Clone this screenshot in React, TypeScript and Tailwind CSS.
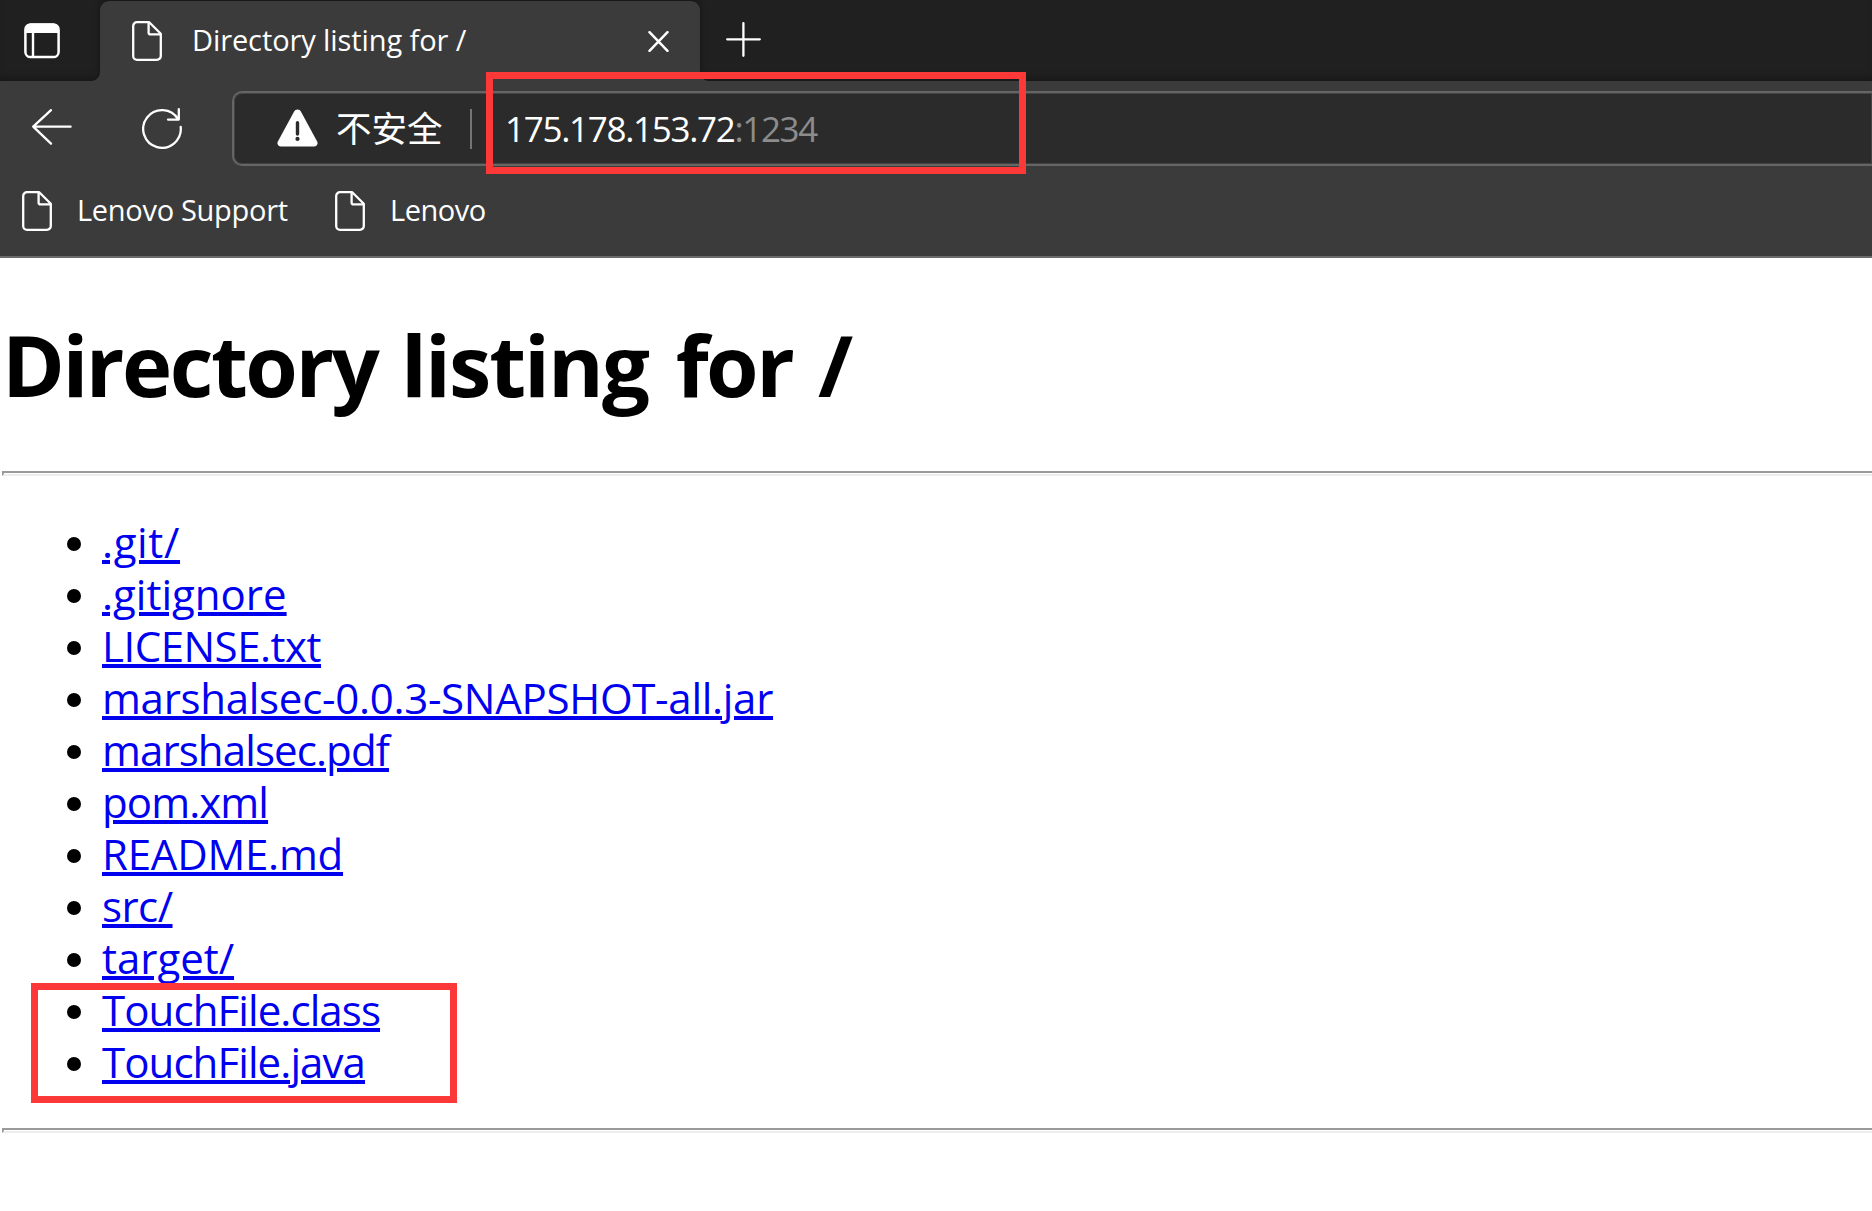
const files = [
  { name: '.git/', tracking: 'tracking-[0.64px]' },
  { name: '.gitignore', tracking: 'tracking-normal' },
  { name: 'LICENSE.txt', tracking: 'tracking-[-0.49px]' },
  { name: 'marshalsec-0.0.3-SNAPSHOT-all.jar', tracking: 'tracking-[-0.285px]' },
  { name: 'marshalsec.pdf', tracking: 'tracking-[-0.886px]' },
  { name: 'pom.xml', tracking: 'tracking-[-0.9px]' },
  { name: 'README.md', tracking: 'tracking-[-0.22px]' },
  { name: 'src/', tracking: 'tracking-[-0.55px]' },
  { name: 'target/', tracking: 'tracking-[-0.03px]' },
  { name: 'TouchFile.class', tracking: 'tracking-[-0.907px]' },
  { name: 'TouchFile.java', tracking: 'tracking-[-0.914px]' },
];

function PageIcon() {
  return (
    <svg className="h-10 w-[30px] shrink-0" viewBox="0 0 30 40" fill="none" stroke="#fff" strokeWidth="2.3" strokeLinejoin="round">
      <path d="M5 1.2H17.2L28.8 12.8V35A3.8 3.8 0 0 1 25 38.8H5A3.8 3.8 0 0 1 1.2 35V5A3.8 3.8 0 0 1 5 1.2Z" />
      <path d="M16.6 1.4V11.4A2 2 0 0 0 18.6 13.4H28.6" />
    </svg>
  );
}

function TabActionsIcon() {
  return (
    <svg className="h-9 w-9 shrink-0" viewBox="0 0 36 36" fill="none">
      <rect x="1.4" y="1.4" width="33.2" height="32.7" rx="5.2" stroke="#fff" strokeWidth="2.5" />
      <path d="M1 10V6A5.5 5.5 0 0 1 6.5 .5H29.5A5.5 5.5 0 0 1 35 6V10Z" fill="#fff" />
      <path d="M9 9V34" stroke="#fff" strokeWidth="2.4" />
    </svg>
  );
}

function TabStrip() {
  return (
    <div className="flex h-[81px] bg-[#202020] pt-px shadow-[inset_0_-7px_7px_-5px_#161616]">
      <div className="flex w-[100px] shrink-0 pl-6 pt-[22px]">
        <TabActionsIcon />
      </div>
      <div className="relative flex h-20 w-[600px] shrink-0 items-center rounded-t-[9px] bg-[#3b3b3b] pl-8 shadow-[0_-1px_6px_rgba(0,0,0,0.4)]">
        <span className="absolute bottom-0 -left-[9px] size-[9px] bg-[radial-gradient(circle_at_0_0,transparent_8.5px,#3b3b3b_9.5px)]" />
        <span className="absolute -right-[9px] bottom-0 size-[9px] bg-[radial-gradient(circle_at_100%_0,transparent_8.5px,#3b3b3b_9.5px)]" />
        <PageIcon />
        <span className="ml-[30px] w-[456px] pb-[2px] text-[29px] leading-10 tracking-[-0.1px] text-white">Directory listing for /</span>
        <svg className="mr-[31px] h-[21px] w-[21px] shrink-0" viewBox="0 0 21 21" stroke="#fff" strokeWidth="2.5" strokeLinecap="round">
          <path d="M1.5 1.2L19.5 19.8M19.5 1.2L1.5 19.8" />
        </svg>
      </div>
      <svg className="ml-[26px] mt-[21px] h-[35px] w-[35px]" viewBox="0 0 35 35" stroke="#fff" strokeWidth="2.3" strokeLinecap="round">
        <path d="M1.2 17.3H33.8M17.4 1.2V33.8" />
      </svg>
    </div>
  );
}

function Toolbar() {
  return (
    <div className="relative flex h-[95px] items-center bg-[#3b3b3b] pl-8">
      <svg className="mb-[3px] h-9 w-10 shrink-0" viewBox="0 0 40 36" fill="none" stroke="#fff" strokeWidth="2.3" strokeLinecap="round" strokeLinejoin="round">
        <path d="M38.6 17.7H1.2M19 1.2L1.2 17.7L19 34.6" />
      </svg>
      <svg className="ml-[70px] h-[41px] w-10 shrink-0" viewBox="0 0 40 41" fill="none" stroke="#fff" strokeWidth="2.3" strokeLinecap="round" strokeLinejoin="round">
        <path d="M38.7 18.9A18.8 18.8 0 1 1 36.2 11.4M36.8 1.2V11.6H26" />
      </svg>
      <div className="ml-[50px] flex h-[75px] flex-1 items-center rounded-l-[10px] border-y-2 border-l-2 border-[#656565] bg-[#2b2b2b] pl-[43px] shadow-[inset_0_0_0_1px_#434343]">
        <svg className="mb-[2px] h-[38px] w-[41px] shrink-0" viewBox="0 0 41 38">
          <path d="M20.5 .5C22 .5 23.2 1.3 24 2.7L40 32.2C41.4 35 39.8 37.5 37 37.5H4C1.2 37.5-.4 35 1 32.2L17 2.7C17.8 1.3 19 .5 20.5 .5Z" fill="#fff" />
          <path d="M20.5 13.8V25" stroke="#2b2b2b" strokeWidth="3.4" strokeLinecap="round" />
          <circle cx="20.5" cy="29.9" r="2.1" fill="#2b2b2b" />
        </svg>
        <span className="ml-[18px] w-[134px] shrink-0 whitespace-nowrap pb-[3px] font-['Noto_Sans_CJK_SC',sans-serif] text-[35.5px] leading-[50px] text-white">不安全</span>
        <span className="h-10 w-0.5 shrink-0 bg-[#757575]" />
        <span className="ml-[33px] text-[35px] leading-[50px] text-white">
          <span className="tracking-[-1.3px]">175.178.153.72</span>
          <span className="tracking-[-1.4px] text-[#8c8c8c]">:1234</span>
        </span>
      </div>
    </div>
  );
}

function Bookmarks() {
  return (
    <div className="flex h-[82px] items-center border-b-2 border-[#6b696b] pb-[10px] pl-[22px] text-[29px] leading-10 text-white">
      <PageIcon />
      <span className="ml-[25px] w-[258px] pb-[2px] tracking-[-0.3px]">Lenovo Support</span>
      <PageIcon />
      <span className="ml-[25px] pb-[2px] tracking-[-0.5px]">Lenovo</span>
    </div>
  );
}

function Rule() {
  return (
    <div className="ml-0.5 h-[5px] border-y-2 border-l-2 border-t-[#9a9a9a] border-b-[#eeeeee] border-l-[#9a9a9a]" />
  );
}

export default function App() {
  return (
    <div className="relative h-[1211px] w-[1872px] overflow-hidden bg-white font-['Open_Sans','Noto_Sans_CJK_SC',sans-serif]">
      <header className="bg-[#3b3b3b]">
        <TabStrip />
        <Toolbar />
        <Bookmarks />
      </header>
      <main className="pt-[50px]">
        <h1 className="mb-[51px] ml-0.5 text-[85px] leading-[112px] font-bold tracking-[-1.36px] text-black">
          <span className="mr-[3px] tracking-[-2.5px]">Directory</span>{' '}
          <span className="mr-[7px] tracking-[-2px]">listing</span>{' '}
          <span className="mr-[5px] tracking-[-2.5px]">for</span>{' '}
          <span>/</span>
        </h1>
        <Rule />
        <ul className="my-10 pl-[67px]">
          {files.map((file) => (
            <li key={file.name} className="flex h-[52px] items-start gap-[21px]">
              <span className="mt-[21px] size-3.5 rounded-full bg-black" />
              <a className={`text-[42px] leading-[52px] text-[#0000ee] underline decoration-4 underline-offset-2 ${file.tracking}`}>{file.name}</a>
            </li>
          ))}
        </ul>
        <Rule />
      </main>
      <div className="absolute top-[72px] left-[486px] h-[102px] w-[540px] border-[7px] border-[#fc3838]" />
      <div className="absolute top-[983px] left-[31px] h-[120px] w-[426px] border-[7px] border-[#fc3838]" />
    </div>
  );
}
